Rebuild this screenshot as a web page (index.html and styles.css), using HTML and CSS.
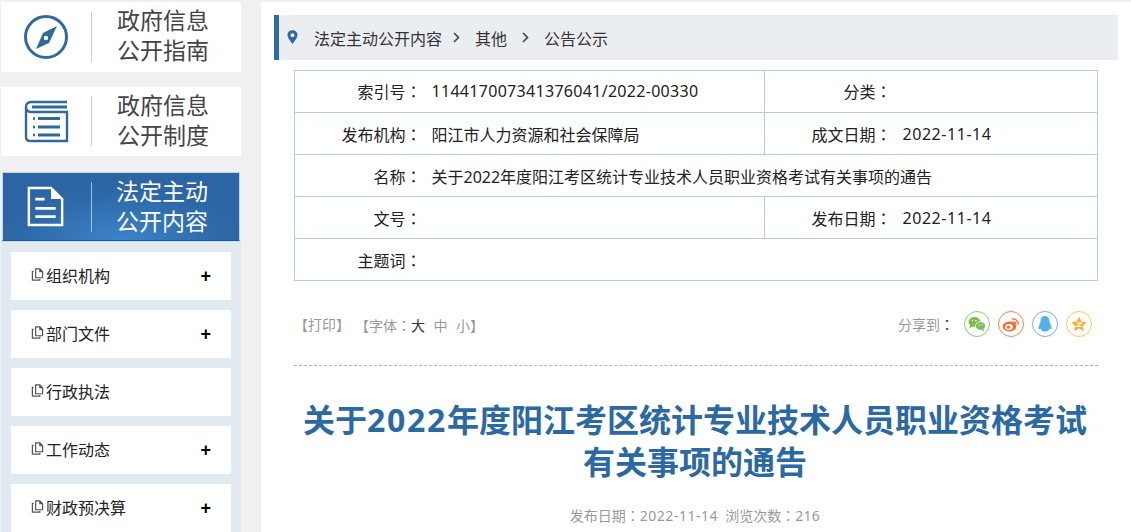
FILE: index.html
```html
<!DOCTYPE html>
<html lang="zh-CN">
<head>
<meta charset="utf-8">
<title>关于2022年度阳江考区统计专业技术人员职业资格考试有关事项的通告</title>
<link rel="stylesheet" href="styles.css">
</head>
<body>
<div class="page">
  <aside class="side">
    <a class="card">
      <span class="card-icon">
        <svg width="46" height="46" viewBox="0 0 46 46"><circle cx="23" cy="23" r="20.5" fill="none" stroke="#2f6a9f" stroke-width="3"/><path d="M34 12 L26 29 L13 35 L20 19 Z" fill="#2f6a9f"/><circle cx="23" cy="24" r="2.2" fill="#fff"/></svg>
      </span>
      <span class="card-text">政府信息<br>公开指南</span>
    </a>
    <a class="card">
      <span class="card-icon">
        <svg width="46" height="44" viewBox="0 0 46 44"><path d="M44 3 H8 Q3 3 3 8 V38 Q3 42 7 42 H44 V13 H8 Q3 13 3 8" fill="none" stroke="#2f6a9f" stroke-width="2.4"/><path d="M9 8 H44" stroke="#2f6a9f" stroke-width="3"/><path d="M15 19.500 H37 M15 28 H37 M15 36 H37" stroke="#2f6a9f" stroke-width="3"/><path d="M10 19.500 h2 M10 28 h2 M10 36 h2" stroke="#2f6a9f" stroke-width="2.400"/></svg>
      </span>
      <span class="card-text">政府信息<br>公开制度</span>
    </a>
    <a class="card card-active">
      <span class="card-icon">
        <svg width="37" height="41" viewBox="0 0 40 44"><path d="M2 2 H26 L38 14 V42 H2 Z" fill="none" stroke="#fff" stroke-width="2.600"/><path d="M26 2 V14 H38 Z" fill="#fff"/><path d="M9 14 H19 M9 24 H31 M9 33 H31" stroke="#fff" stroke-width="3"/></svg>
      </span>
      <span class="card-text">法定主动<br>公开内容</span>
    </a>
    <nav class="menu">
      <a class="menu-item"><span class="menu-label"><svg class="copy" width="13" height="13" viewBox="0 0 13 14"><path d="M4.500 1 H9 L12 4 V10.500 H4.500 Z M9 1 V4 H12" fill="none" stroke="#555" stroke-width="1.300"/><path d="M2.500 3.500 H1 V13 H9 V11.500" fill="none" stroke="#555" stroke-width="1.300"/></svg>组织机构</span><b class="plus">+</b></a>
      <a class="menu-item"><span class="menu-label"><svg class="copy" width="13" height="13" viewBox="0 0 13 14"><path d="M4.500 1 H9 L12 4 V10.500 H4.500 Z M9 1 V4 H12" fill="none" stroke="#555" stroke-width="1.300"/><path d="M2.500 3.500 H1 V13 H9 V11.500" fill="none" stroke="#555" stroke-width="1.300"/></svg>部门文件</span><b class="plus">+</b></a>
      <a class="menu-item"><span class="menu-label"><svg class="copy" width="13" height="13" viewBox="0 0 13 14"><path d="M4.500 1 H9 L12 4 V10.500 H4.500 Z M9 1 V4 H12" fill="none" stroke="#555" stroke-width="1.300"/><path d="M2.500 3.500 H1 V13 H9 V11.500" fill="none" stroke="#555" stroke-width="1.300"/></svg>行政执法</span></a>
      <a class="menu-item"><span class="menu-label"><svg class="copy" width="13" height="13" viewBox="0 0 13 14"><path d="M4.500 1 H9 L12 4 V10.500 H4.500 Z M9 1 V4 H12" fill="none" stroke="#555" stroke-width="1.300"/><path d="M2.500 3.500 H1 V13 H9 V11.500" fill="none" stroke="#555" stroke-width="1.300"/></svg>工作动态</span><b class="plus">+</b></a>
      <a class="menu-item"><span class="menu-label"><svg class="copy" width="13" height="13" viewBox="0 0 13 14"><path d="M4.500 1 H9 L12 4 V10.500 H4.500 Z M9 1 V4 H12" fill="none" stroke="#555" stroke-width="1.300"/><path d="M2.500 3.500 H1 V13 H9 V11.500" fill="none" stroke="#555" stroke-width="1.300"/></svg>财政预决算</span><b class="plus">+</b></a>
    </nav>
  </aside>

  <main class="main">
    <div class="crumbs">
      <svg class="pin" width="11" height="14" viewBox="0 0 12 15"><path fill-rule="evenodd" d="M6 0 C2.700 0 .5 2.400 .5 5.300 C.5 8.500 3.800 12 6 15 C8.200 12 11.500 8.500 11.500 5.300 C11.500 2.400 9.300 0 6 0 Z M6 3.300 A2.200 2.200 0 1 1 6 7.700 A2.200 2.200 0 1 1 6 3.300 Z" fill="#2f6a9f"/></svg>
      <span>法定主动公开内容</span>
      <svg class="chev chev-a" width="7" height="11" viewBox="0 0 7 11"><path d="M1 1 L5.500 5.500 L1 10" fill="none" stroke="#444" stroke-width="1.600"/></svg>
      <span>其他</span>
      <svg class="chev chev-b" width="7" height="11" viewBox="0 0 7 11"><path d="M1 1 L5.500 5.500 L1 10" fill="none" stroke="#444" stroke-width="1.600"/></svg>
      <span>公告公示</span>
    </div>

    <div class="body">
      <table class="meta">
        <colgroup><col class="c1"><col class="c2"><col class="c3"><col class="c4"></colgroup>
        <tr class="row-first"><th>索引号<span class="colon" lang="zh-TW">：</span></th><td class="num num-id">114417007341376041/2022-00330</td><th>分类<span class="colon" lang="zh-TW">：</span></th><td></td></tr>
        <tr><th>发布机构<span class="colon" lang="zh-TW">：</span></th><td>阳江市人力资源和社会保障局</td><th>成文日期<span class="colon" lang="zh-TW">：</span></th><td class="num">2022-11-14</td></tr>
        <tr><th>名称<span class="colon" lang="zh-TW">：</span></th><td colspan="3">关于2022年度阳江考区统计专业技术人员职业资格考试有关事项的通告</td></tr>
        <tr><th>文号<span class="colon" lang="zh-TW">：</span></th><td></td><th>发布日期<span class="colon" lang="zh-TW">：</span></th><td class="num">2022-11-14</td></tr>
        <tr><th>主题词<span class="colon" lang="zh-TW">：</span></th><td colspan="3"></td></tr>
      </table>

      <div class="tools">
        <div class="tools-left">
          <span>【打印】</span>
          <span class="font-size">【字体<span class="colon" lang="zh-TW">：</span><b class="sz sz-on">大</b><b class="sz">中</b><b class="sz">小</b>】</span>
        </div>
        <div class="share">
          <span class="share-label">分享到<span class="colon colon-dark" lang="zh-TW">：</span></span>
          <svg class="sico" width="26" height="26" viewBox="0 0 26 26"><circle cx="13" cy="13" r="12.500" fill="#fff" stroke="#8fcb6e"/><ellipse cx="10.500" cy="11" rx="6" ry="5" fill="#7cbb4d"/><path d="M6 14 L5.500 17.500 L9 15 Z" fill="#7cbb4d"/><ellipse cx="16.500" cy="15" rx="5" ry="4.200" fill="#7cbb4d" stroke="#fff" stroke-width=".8"/><path d="M19.500 18 L20.500 20.500 L17.500 19 Z" fill="#7cbb4d"/><circle cx="8.500" cy="9.500" r=".8" fill="#fff"/><circle cx="12" cy="9.500" r=".8" fill="#fff"/><circle cx="15" cy="14" r=".7" fill="#fff"/><circle cx="18" cy="14" r=".7" fill="#fff"/></svg>
          <svg class="sico" width="26" height="26" viewBox="0 0 26 26"><circle cx="13" cy="13" r="12.500" fill="#fff" stroke="#ff7f55"/><ellipse cx="11.500" cy="15.500" rx="6.800" ry="5" fill="#fb6b35"/><ellipse cx="11" cy="16" rx="3.800" ry="2.900" fill="#fff"/><circle cx="10.500" cy="16.200" r="1.600" fill="#fb6b35"/><path d="M14 8 A5.500 5.500 0 0 1 20.500 13.500 M15 10.800 A2.700 2.700 0 0 1 18 13.500" fill="none" stroke="#fb6b35" stroke-width="1.300"/></svg>
          <svg class="sico" width="26" height="26" viewBox="0 0 26 26"><circle cx="13" cy="13" r="12.500" fill="#fff" stroke="#63b6ea"/><path d="M13 5 C9.500 5 8.500 8 8.500 10.500 C8.500 12.500 6.500 14.500 6.500 17 C6.500 18.500 7.500 18.500 8.500 17.500 C9 20 11 20.500 13 20.500 C15 20.500 17 20 17.500 17.500 C18.500 18.500 19.500 18.500 19.500 17 C19.500 14.500 17.500 12.500 17.500 10.500 C17.500 8 16.500 5 13 5 Z" fill="#55b2e8"/></svg>
          <svg class="sico" width="26" height="26" viewBox="0 0 26 26"><circle cx="13" cy="13" r="12.500" fill="#fff" stroke="#ffc660"/><path d="M13 5.500 L15.300 10.600 L20.800 11.200 L16.700 14.900 L17.900 20.300 L13 17.500 L8.100 20.300 L9.300 14.900 L5.200 11.200 L10.700 10.600 Z" fill="#ffab2e"/><path d="M10.500 12 H15.500 L10.800 15.500 H15.800" fill="none" stroke="#fff" stroke-width="1.100"/></svg>
        </div>
      </div>

      <article class="article">
        <h1 class="title">关于<span class="title-num">2022</span>年度阳江考区统计专业技术人员职业资格考试<br>有关事项的通告</h1>
        <p class="info">发布日期<span class="colon" lang="zh-TW">：</span><span class="info-date">2022-11-14</span>&nbsp;&nbsp;浏览次数<span class="colon" lang="zh-TW">：</span><span class="info-count">216</span></p>
      </article>
    </div>
  </main>
</div>
</body>
</html>
```

FILE: styles.css
```css
* { box-sizing: border-box; }
html, body { margin: 0; padding: 0; height: 532px; overflow: hidden; }
body {
  background: #f0f0f0;
  font-family: "Noto Sans", "Noto Sans CJK SC", sans-serif;
  color: #333;
}
.page {
  display: flex;
  gap: 20px;
  padding: 2px 0 0 1px;
  height: 532px;
  overflow: hidden;
}
.colon { font-family: "Noto Sans CJK TC", sans-serif; }

/* sidebar */
.side { width: 240px; flex: none; display: flex; flex-direction: column; }
.card {
  display: flex;
  align-items: center;
  height: 70px;
  margin-bottom: 15px;
  background: #fff;
}
.card + .card + .card { margin-bottom: 0; }
.card-icon {
  width: 90px;
  height: 50px;
  display: flex;
  align-items: center;
  justify-content: center;
  border-right: 1px solid #ccc;
  flex: none;
  box-sizing: content-box;
}
.card-text {
  margin-left: 25px;
  padding-bottom: 3px;
  font-size: 23px;
  line-height: 30px;
  color: #444;
  white-space: nowrap;
}
.card-active {
  height: 69px;
  margin-top: 1px;
  margin-left: 1px;
  margin-right: 1px;
  border: 1px solid #c6d5e4;
  border-bottom: 1px solid #20568f;
  background: radial-gradient(ellipse 130px 60px at 50% 100%, #3c83cb 0%, #2e69a8 75%, #2c65a3 100%);
}
.card-active .card-icon { width: 84px; padding-right: 4px; border-right-color: rgba(255,255,255,.55); }
.card-active .card-text { color: #fff; margin-left: 24px; padding-bottom: 2px; }

.menu {
  flex: 1;
  background: #e0eaf0;
  padding: 10px 10px 0;
  display: flex;
  flex-direction: column;
  gap: 10px;
  border-top: 1px solid #c9dcea;
}
.menu-item {
  height: 48px;
  flex: none;
  background: #fff;
  display: flex;
  align-items: center;
  justify-content: space-between;
  padding: 0 20px 2px;
  font-size: 16px;
  color: #222;
}
.menu-label { display: flex; align-items: center; }
.copy { margin-right: 2px; }
.plus {
  font-family: "Liberation Sans", sans-serif;
  font-size: 18px;
  line-height: 1;
  font-weight: 700;
  color: #000;
  margin-top: 2px;
}

/* main */
.main { flex: 1; background: #fff; padding: 13px 13px 0 13px; min-width: 0; }
.crumbs {
  height: 45px;
  background: #ebeef1;
  border-left: 5px solid #2b6ca3;
  display: flex;
  align-items: center;
  padding-left: 8px;
  font-size: 16px;
  color: #333;
}
.pin { margin-right: 16px; position: relative; top: -1px; }
.chev-a { margin: 0 15px 0 11px; }
.chev-b { margin: 0 15px 0 15px; }

.body { padding: 10px 20px 0; }
.meta {
  width: 804px;
  table-layout: fixed;
  border-collapse: collapse;
  font-size: 16px;
  color: #222;
}
.c1 { width: 128px; }
.c2 { width: 342px; }
.c3 { width: 128px; }
.meta th, .meta td {
  height: 42px;
  padding: 0;
  border: 1px solid #afcde6;
  font-weight: 400;
}
.meta th { text-align: right; border-right: 0; padding-right: 1px; }
.meta td { text-align: left; padding-left: 10px; border-left: 0; white-space: nowrap; }
.meta td:nth-child(2) { padding-left: 9px; }
.meta .row-first th, .meta .row-first td { padding-bottom: 2px; }
.num { letter-spacing: .55px; }
.num-id { letter-spacing: .3px; }

.tools {
  height: 85px;
  padding-top: 30px;
  border-bottom: 1px dashed #b5b5b5;
  display: flex;
  justify-content: space-between;
  font-size: 14px;
  color: #999;
}
.tools-left { display: flex; line-height: 26px; height: 26px; padding-top: 1px; }
.font-size { margin-left: 5px; }
.sz { font-weight: 400; margin-right: 8.500px; color: #999; }
.sz-on { color: #333; }
.sz:last-of-type { margin-right: 0; }
.share { display: flex; align-items: center; gap: 8px; height: 26px; padding-right: 6px; }
.share-label { line-height: 26px; margin-right: 2px; padding-top: 1px; }
.colon-dark { color: #333; }
.sico { display: block; }

.article { text-align: center; padding-right: 2px; }
.title {
  margin: 33px 0 0;
  font-size: 32px;
  line-height: 42px;
  font-weight: 700;
  color: #2b69a5;
}
.title-num { letter-spacing: 1.75px; }
.info { margin: 22px 0 0; font-size: 14px; line-height: 20px; color: #999; }
.info-date { letter-spacing: .5px; }
.info-count { letter-spacing: .3px; }
```
